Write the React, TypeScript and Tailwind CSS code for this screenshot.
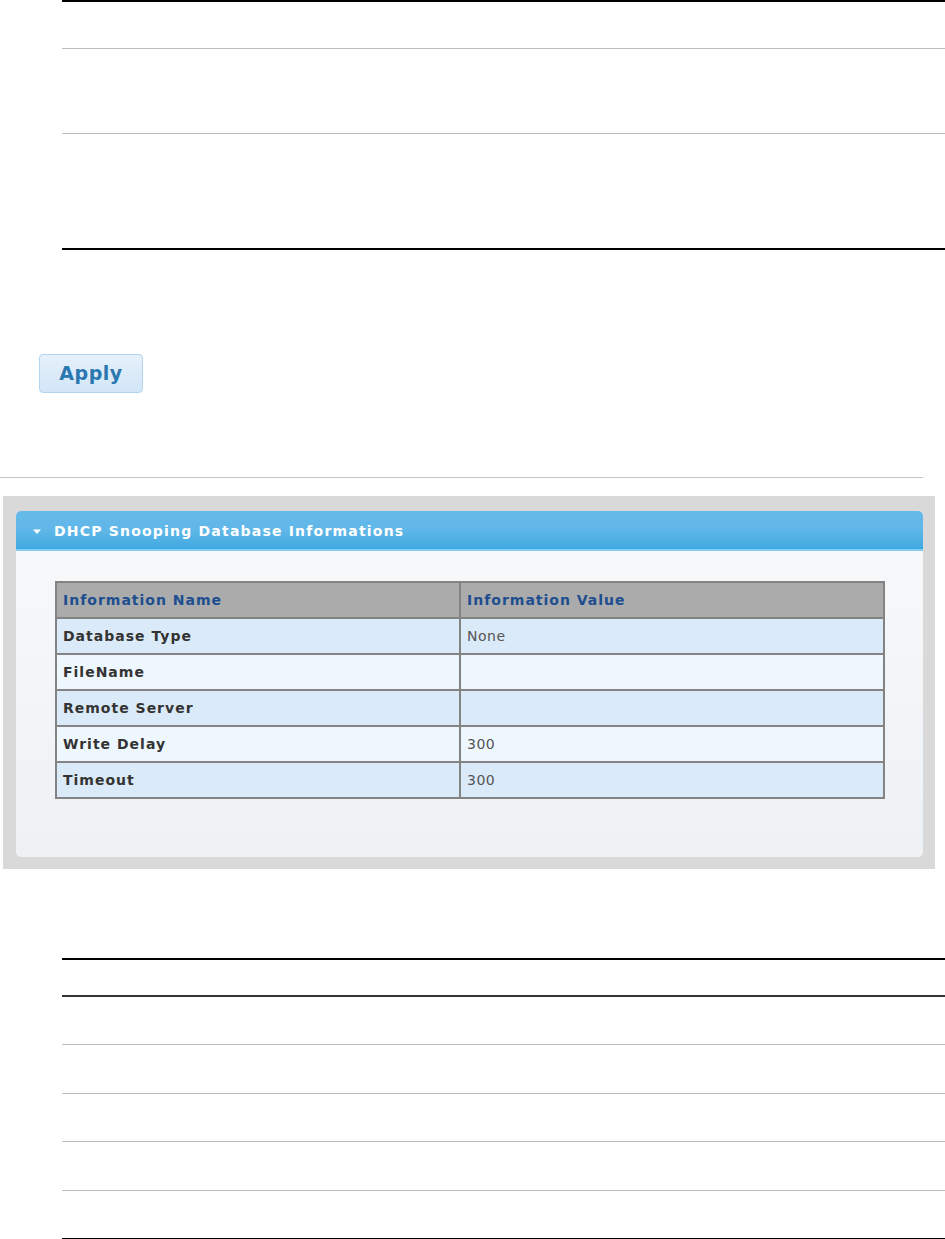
import React from "react";

const rows = [
  { name: "Database Type", value: "None" },
  { name: "FileName", value: "" },
  { name: "Remote Server", value: "" },
  { name: "Write Delay", value: "300" },
  { name: "Timeout", value: "300" },
];

const font = "font-['Tahoma','DejaVu_Sans','Liberation_Sans',sans-serif]";

export default function App() {
  return (
    <div className={`w-[945px] bg-white ${font}`}>
      {/* top settings table (empty rows) */}
      <div className="ml-[62px]">
        <div className="h-[48px] border-t-2 border-black" />
        <div className="h-[85px] border-t border-[#bdbdbd]" />
        <div className="h-[115px] border-t border-[#bdbdbd]" />
        <div className="border-t-2 border-black" />
      </div>

      <div className="ml-[39px] mt-[104px]">
        <button className="flex h-[39px] w-[104px] items-center justify-center rounded-[4px] border border-[#b3d4ee] bg-gradient-to-b from-[#e6f1fb] via-[#dcebf9] to-[#d2e6f7] text-[19px] font-bold tracking-[0.5px] text-[#2b78b0]">
          Apply
        </button>
      </div>

      <div className="mt-[84px] h-px w-[923px] bg-[#c4c4c4]" />

      {/* info panel */}
      <div className="ml-[3px] mt-[18px] w-[932px] bg-[#d9d9d9] pb-[12px] pl-[13px] pr-[12px] pt-[15px]">
        <div className="h-[346px] rounded-[5px] bg-gradient-to-b from-[#f8f9fa] to-[#eef2f5]">
          <div className="flex h-[40px] items-center rounded-t-[5px] border-b-2 border-[#84ccf1] bg-gradient-to-b from-[#66bae9] via-[#5fb7e8] to-[#3ea8e0] pl-[16px] pt-[3px]">
            <svg width="10" height="6" viewBox="0 0 10 6" className="mr-[12px]">
              <path d="M1 0.5 H9 L5 5 Z" fill="#ffffff" />
            </svg>
            <span className="text-[14px] font-bold tracking-[1.2px] text-white">
              DHCP Snooping Database Informations
            </span>
          </div>

          <div className="pl-[39px] pt-[30px]">
            <table className="w-[830px] border-collapse border-2 border-[#838383]">
              <thead>
                <tr className="h-[36px] bg-[#ababab]">
                  <th className="w-[404px] border-2 border-[#838383] px-[6px] text-left text-[14px] font-bold tracking-[1px] text-[#1d4e8f]">
                    Information Name
                  </th>
                  <th className="border-2 border-[#838383] px-[6px] text-left text-[14px] font-bold tracking-[1px] text-[#1d4e8f]">
                    Information Value
                  </th>
                </tr>
              </thead>
              <tbody>
                {rows.map((r, i) => (
                  <tr
                    key={r.name}
                    className={`h-[36px] ${i % 2 === 0 ? "bg-[#dbeaf8]" : "bg-[#eff7fe]"}`}
                  >
                    <td className="border-2 border-[#838383] px-[6px] text-[14px] font-bold tracking-[1px] text-[#333333]">
                      {r.name}
                    </td>
                    <td className="border-2 border-[#838383] px-[6px] text-[14px] tracking-[0.5px] text-[#555555]">
                      {r.value}
                    </td>
                  </tr>
                ))}
              </tbody>
            </table>
          </div>
        </div>
      </div>

      {/* bottom table (empty rows) */}
      <div className="ml-[62px] mt-[89px]">
        <div className="h-[37px] border-t-2 border-black" />
        <div className="h-[49px] border-t-2 border-[#333333]" />
        <div className="h-[49px] border-t border-[#bdbdbd]" />
        <div className="h-[48px] border-t border-[#bdbdbd]" />
        <div className="h-[49px] border-t border-[#bdbdbd]" />
        <div className="h-[48px] border-t border-[#bdbdbd]" />
        <div className="border-t-2 border-black" />
      </div>
    </div>
  );
}
